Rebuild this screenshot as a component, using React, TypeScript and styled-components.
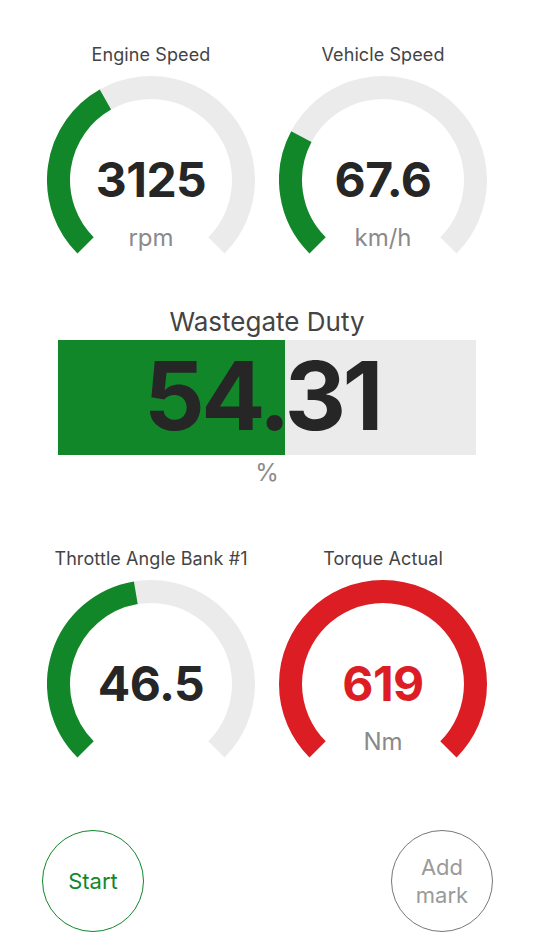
import React from "react";
import styled, { createGlobalStyle } from "styled-components";

const GREEN = "#12872a";
const RED = "#dc1e24";
const TRACK = "#ebebeb";

const Global = createGlobalStyle`
  html, body { margin: 0; padding: 0; background: #ffffff; }
  body { font-family: Inter, "Noto Sans", "Liberation Sans", sans-serif; -webkit-font-smoothing: antialiased; }
`;

const Page = styled.div`
  width: 534px;
  height: 950px;
  display: flex;
  flex-direction: column;
  align-items: center;
  padding-top: 45px;
  box-sizing: border-box;
  overflow: hidden;
`;

const GaugeRow = styled.div`
  display: flex;
  justify-content: center;
  width: 100%;
  margin-top: ${(p: { $mt: number }) => p.$mt}px;
`;

const Cell = styled.div`
  width: 232px;
  display: flex;
  flex-direction: column;
  align-items: center;
`;

const Label = styled.div`
  font-size: 18px;
  line-height: 20px;
  color: #444444;
  margin-bottom: 11px;
  white-space: nowrap;
  letter-spacing: 0.1px;
`;

const GaugeBox = styled.div`
  display: grid;
  width: 208px;
  height: 180px;
  justify-items: center;
  & > * { grid-area: 1 / 1; }
`;

const Dial = styled.svg`
  width: 208px;
  height: 180px;
  display: block;
`;

const Value = styled.div<{ $color: string }>`
  align-self: start;
  margin-top: 80px;
  font-size: 48px;
  line-height: 48px;
  font-weight: 700;
  color: ${(p) => p.$color};
  letter-spacing: -0.5px;
`;

const Unit = styled.div`
  align-self: start;
  margin-top: 148px;
  font-size: 24px;
  line-height: 28px;
  color: #8a8a8a;
`;

const R = 92.5;
const C = 104;
const pt = (deg: number) => {
  const a = (deg * Math.PI) / 180;
  return `${(C + R * Math.cos(a)).toFixed(2)} ${(C + R * Math.sin(a)).toFixed(2)}`;
};
const arc = (frac: number) => {
  const sweep = 270 * frac;
  const end = 135 + sweep;
  return `M ${pt(135)} A ${R} ${R} 0 ${sweep > 180 ? 1 : 0} 1 ${pt(end)}`;
};

type GaugeProps = {
  label: string;
  value: string;
  unit?: string;
  frac: number;
  color: string;
  valueColor?: string;
};

const Gauge = ({ label, value, unit, frac, color, valueColor = "#262626" }: GaugeProps) => (
  <Cell>
    <Label>{label}</Label>
    <GaugeBox>
      <Dial viewBox="0 0 208 180">
        <path d={arc(1)} fill="none" stroke={TRACK} strokeWidth={23} />
        <path d={arc(frac)} fill="none" stroke={color} strokeWidth={23} />
      </Dial>
      <Value $color={valueColor}>{value}</Value>
      {unit && <Unit>{unit}</Unit>}
    </GaugeBox>
  </Cell>
);

const BarTitle = styled.div`
  margin-top: 51px;
  font-size: 26px;
  line-height: 29px;
  color: #444444;
`;

const Bar = styled.div`
  margin-top: 4px;
  width: 418px;
  height: 115px;
  background: ${TRACK};
  display: grid;
  & > * { grid-area: 1 / 1; }
`;

const Fill = styled.div`
  background: ${GREEN};
  height: 100%;
`;

const BarValue = styled.div`
  justify-self: center;
  align-self: center;
  font-size: 95px;
  line-height: 95px;
  font-weight: 700;
  color: #262626;
  letter-spacing: -3.5px;
  margin-top: -4px;
  margin-right: 10px;
`;

const BarUnit = styled.div`
  margin-top: 4px;
  font-size: 24px;
  line-height: 28px;
  color: #8a8a8a;
`;

const Buttons = styled.div`
  margin-top: 70px;
  width: 100%;
  display: flex;
  justify-content: space-between;
  padding: 0 41px 0 42px;
  box-sizing: border-box;
`;

const RoundButton = styled.button<{ $color: string; $text: string }>`
  width: 102px;
  height: 102px;
  border-radius: 50%;
  border: 1.5px solid ${(p) => p.$color};
  background: transparent;
  color: ${(p) => p.$text};
  font-family: inherit;
  font-size: 22px;
  line-height: 28px;
  padding: 0;
  display: flex;
  align-items: center;
  justify-content: center;
  text-align: center;
`;

export default function App() {
  const duty = 54.31;
  return (
    <>
      <Global />
      <Page>
        <GaugeRow $mt={0}>
          <Gauge label="Engine Speed" value="3125" unit="rpm" frac={3125 / 8000} color={GREEN} />
          <Gauge label="Vehicle Speed" value="67.6" unit="km/h" frac={67.6 / 250} color={GREEN} />
        </GaugeRow>
        <BarTitle>Wastegate Duty</BarTitle>
        <Bar>
          <Fill style={{ width: `${duty}%` }} />
          <BarValue>{duty.toFixed(2)}</BarValue>
        </Bar>
        <BarUnit>%</BarUnit>
        <GaugeRow $mt={62}>
          <Gauge label="Throttle Angle Bank #1" value="46.5" frac={0.465} color={GREEN} />
          <Gauge label="Torque Actual" value="619" unit="Nm" frac={1} color={RED} valueColor={RED} />
        </GaugeRow>
        <Buttons>
          <RoundButton $color={GREEN} $text={GREEN}>Start</RoundButton>
          <RoundButton $color="#777777" $text="#9a9a9a">Add<br />mark</RoundButton>
        </Buttons>
      </Page>
    </>
  );
}
